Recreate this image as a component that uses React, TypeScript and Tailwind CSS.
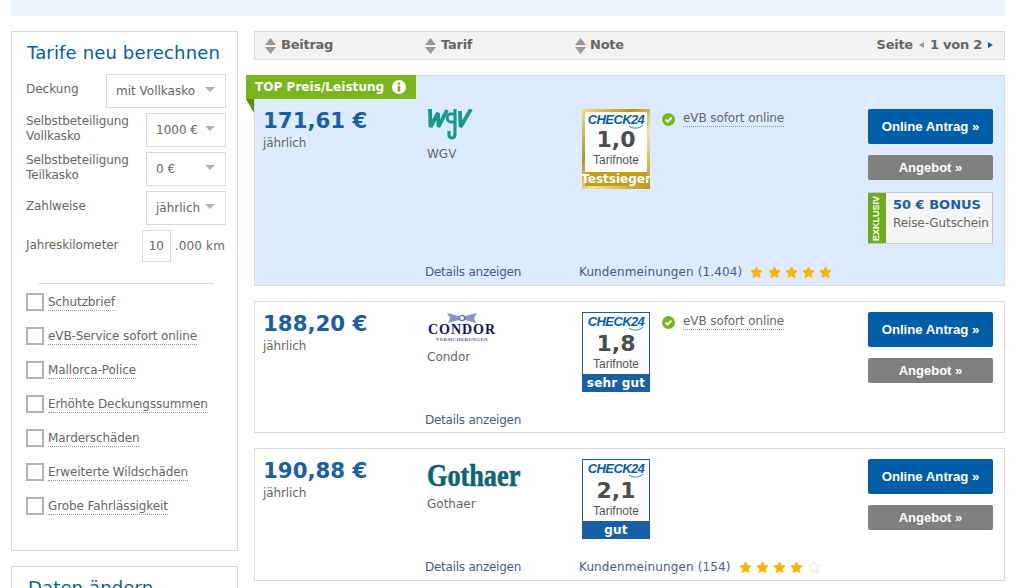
import { Star } from 'lucide-react';

const sans = "font-['DejaVu_Sans',Verdana,sans-serif]";

const coverage = [
  { label: ['Selbstbeteiligung', 'Vollkasko'], value: '1000 €' },
  { label: ['Selbstbeteiligung', 'Teilkasko'], value: '0 €' },
  { label: ['Zahlweise'], value: 'jährlich' },
];

const options = [
  'Schutzbrief',
  'eVB-Service sofort online',
  'Mallorca-Police',
  'Erhöhte Deckungssummen',
  'Marderschäden',
  'Erweiterte Wildschäden',
  'Grobe Fahrlässigkeit',
];

function SelectBox({ value, width }: { value: string; width: string }) {
  return (
    <div className={`flex h-[34px] items-center justify-between border border-[#d9d9d9] bg-white pl-[9px] pr-[10px] text-[12px] text-[#666] ${width}`}>
      <span>{value}</span>
      <svg width="10" height="5" viewBox="0 0 10 5" className="mb-[3px] shrink-0">
        <path d="M0 0h10L5 5z" fill="#b3b3b3" />
      </svg>
    </div>
  );
}

function SortArrows() {
  return (
    <svg width="11" height="16" viewBox="0 0 11 16" className="shrink-0">
      <path d="M5.5 0L11 7H0z" fill="#999" />
      <path d="M0 9h11l-5.5 7z" fill="#999" />
    </svg>
  );
}

function Sidebar() {
  return (
    <aside className="w-[227px] shrink-0">
      <div className="h-[520px] border border-[#d9d9d9] pl-[14px] pr-[11px] pt-[9px]">
        <h2 className="pl-[1px] text-[18px] leading-[24px] tracking-[0.15px] text-[#005ea8]">Tarife neu berechnen</h2>
        <div className="mt-[9px] flex items-center justify-between">
          <span className="mb-[5px] text-[12px] text-[#666]">Deckung</span>
          <SelectBox value="mit Vollkasko" width="w-[120px]" />
        </div>
        {coverage.map((row) => (
          <div key={row.value} className="mt-[5px] flex items-center justify-between">
            <span className="mb-[3px] text-[12px] leading-[15px] tracking-[-0.1px] text-[#666]">
              {row.label.map((line) => (
                <span key={line} className="block">{line}</span>
              ))}
            </span>
            <SelectBox value={row.value} width="w-[80px]" />
          </div>
        ))}
        <div className="mt-[5px] flex items-center justify-between">
          <span className="mb-[3px] text-[12px] tracking-[-0.1px] text-[#666]">Jahreskilometer</span>
          <span className="flex items-center pr-[1px] text-[12px] text-[#666]">
            <span className="flex h-[32px] w-[29px] items-center justify-center border border-[#d9d9d9]">10</span>
            <span className="ml-[4px] tracking-[0.15px]">.000 km</span>
          </span>
        </div>
        <div className="mx-[12px] mt-[21px] border-t border-[#d9d9d9]" />
        <ul className="mt-[9px] flex flex-col gap-[16px]">
          {options.map((option) => (
            <li key={option} className="flex h-[18px] items-center gap-[4px]">
              <span className="h-[18px] w-[18px] shrink-0 border-2 border-[#b3b3b3] bg-white" />
              <span className="mt-[2px] border-b border-dotted border-[#999] text-[12px] leading-[15px] tracking-[-0.1px] text-[#666]">{option}</span>
            </li>
          ))}
        </ul>
      </div>
      <div className="mt-[15px] h-[60px] border border-[#d9d9d9] pl-[16px] pt-[9px]">
        <h2 className="text-[18px] leading-[24px] tracking-[0.15px] text-[#005ea8]">Daten ändern</h2>
      </div>
    </aside>
  );
}

function HeaderBar() {
  return (
    <div className="flex h-[29px] items-center border border-[#d9d9d9] bg-[#f2f2f2] text-[13px] font-bold tracking-[-0.25px] text-[#666]">
      <div className="ml-[10px] flex w-[160px] items-center gap-[5px]">
        <SortArrows />
        <span className="mb-[2px]">Beitrag</span>
      </div>
      <div className="flex w-[150px] items-center gap-[5px]">
        <SortArrows />
        <span className="mb-[2px]">Tarif</span>
      </div>
      <div className="flex items-center gap-[4px]">
        <SortArrows />
        <span className="mb-[2px]">Note</span>
      </div>
      <div className="ml-auto mr-[11px] flex items-center">
        <span className="mb-[2px]">Seite</span>
        <svg width="5" height="6" viewBox="0 0 5 6" className="mx-[6px] mb-[2px]">
          <path d="M5 0v6L0 3z" fill="#999" />
        </svg>
        <span className="mb-[2px]">1 von 2</span>
        <svg width="5" height="6" viewBox="0 0 5 6" className="mb-[2px] ml-[6px]">
          <path d="M0 0v6l5-3z" fill="#005ea8" />
        </svg>
      </div>
    </div>
  );
}

function WgvLogo() {
  return (
    <svg width="46" height="31" viewBox="0 0 46 31" fill="none" stroke="#18998f" strokeLinejoin="bevel">
      <path d="M3 0l.5 18L11 4l.5 14L20 1" strokeWidth="3.8" />
      <path d="M28 5h-5c-3 0-4 7 0 8h5" strokeWidth="2.8" />
      <path d="M28 0v25c0 5-6 5-6 1v-4" strokeWidth="3.2" />
      <path d="M33 2l.5 16L44 0" strokeWidth="3.8" />
    </svg>
  );
}

function CondorLogo() {
  return (
    <div className="flex w-[70px] flex-col items-center font-['Liberation_Serif',serif] text-[#14145a]">
      <svg width="30" height="10" viewBox="0 0 30 10" className="mb-[1px]">
        <path d="M0 0l12 3v4L1 10l2-5z" fill="#8f8fcf" />
        <path d="M30 0L18 3v4l11 3-2-5z" fill="#8f8fcf" />
        <circle cx="15" cy="5" r="2.6" fill="none" stroke="#6a6ab0" strokeWidth="1.3" />
      </svg>
      <span className="text-[14px] font-bold leading-[12px] tracking-[1px]">CONDOR</span>
      <span className="text-[5px] font-bold leading-[7px] tracking-[0.3px] text-[#5a5a90]">VERSICHERUNGEN</span>
    </div>
  );
}

function GothaerLogo() {
  return (
    <span className="origin-left scale-x-[0.82] font-['Liberation_Serif',serif] text-[32px] font-bold leading-[30px] text-[#0f6470] [-webkit-text-stroke:0.6px_#0f6470]">
      Gothaer
    </span>
  );
}

function CheckMark() {
  return (
    <span className="relative block">
      <span className="block font-['Liberation_Sans',sans-serif] text-[13px] font-bold italic leading-[14px] tracking-[-0.6px] text-[#005ea8]">
        CHECK24
      </span>
      <svg width="16" height="4" viewBox="0 0 16 4" className="absolute -bottom-[2px] right-0">
        <path d="M1 1c4 3 10 3 14-1" fill="none" stroke="#005ea8" strokeWidth="0.8" />
      </svg>
    </span>
  );
}

function GradeBadge({ grade, label, gold }: { grade: string; label: string; gold?: boolean }) {
  const frame = gold
    ? 'bg-[linear-gradient(135deg,#f1dc8c,#b98f1c_35%,#f5e49c_60%,#bd9120)] p-[3px]'
    : 'bg-[#1a5ea4] p-[1px] pb-0';
  return (
    <div className={`flex h-[80px] w-[68px] shrink-0 flex-col ${frame}`}>
      <div className={`flex flex-1 flex-col items-center bg-white ${gold ? 'pt-[1px]' : 'pt-[2px]'}`}>
        <CheckMark />
        <span className={`text-[22px] font-bold leading-[26px] text-[#4d4d4d] ${gold ? '' : 'mt-[2px]'}`}>{grade}</span>
        <span className="mt-[1px] font-['Liberation_Sans',sans-serif] text-[12px] leading-[13px] text-[#555]">Tarifnote</span>
      </div>
      <div className={`flex items-center justify-center whitespace-nowrap text-[12px] font-bold text-white ${gold ? 'h-[14px] bg-[#c49d1c]' : 'h-[18px] bg-[#1a5ea4] tracking-[0.2px]'}`}>
        {label}
      </div>
    </div>
  );
}

function Check() {
  return (
    <svg width="13" height="13" viewBox="0 0 13 13" className="shrink-0">
      <circle cx="6.5" cy="6.5" r="6.5" fill="#7ab51d" />
      <path d="M3.5 6.5l2.2 2.2 3.8-4" fill="none" stroke="#fff" strokeWidth="1.8" />
    </svg>
  );
}

function Rating({ count, stars }: { count: string; stars: number }) {
  return (
    <div className="mt-[1px] flex items-center text-[12px] tracking-[0.12px] text-[#4a5a8c]">
      Kundenmeinungen ({count})
      <span className="ml-[8px] flex gap-[4.3px]">
        {[1, 2, 3, 4, 5].map((n) => (
          <Star
            key={n}
            size={13}
            strokeWidth={1.5}
            className={n <= stars ? 'fill-[#fbb400] text-[#fbb400]' : 'text-[#f5dcc0]'}
          />
        ))}
      </span>
    </div>
  );
}

function Buttons({ bonus }: { bonus?: boolean }) {
  return (
    <div className="flex w-[125px] shrink-0 flex-col font-['Liberation_Sans',sans-serif] font-bold text-white">
      <button className="h-[35px] rounded-[2px] bg-[#005ea8] text-[13.2px]">Online Antrag »</button>
      <button className="mt-[11px] h-[25px] rounded-[2px] bg-[#808080] text-[13px]">Angebot »</button>
      {bonus && (
        <div className="mt-[12px] flex h-[52px] border border-[#c8c8c8] bg-[#f5f5f5]">
          <span className="-my-[1px] -ml-[1px] flex w-[18px] rotate-180 items-center justify-center bg-[#6cab1e] text-[9px] [writing-mode:vertical-rl]">
            EXKLUSIV
          </span>
          <div className={`pl-[8px] pt-[3px] font-normal text-[#666] ${sans}`}>
            <div className="text-[13px] font-bold leading-[18px] text-[#1a5ea4]">50 € BONUS</div>
            <div className="text-[12px] leading-[18px] tracking-[-0.1px]">Reise-Gutschein</div>
          </div>
        </div>
      )}
    </div>
  );
}

function TopFlag() {
  return (
    <div className="absolute -left-[9px] -top-[1px]">
      <div className="flex h-[24px] w-[170px] items-center gap-[8px] bg-[#7ab51d] pl-[9px] text-[12px] font-bold tracking-[0.05px] text-white">
        TOP Preis/Leistung
        <svg width="14" height="14" viewBox="0 0 14 14">
          <circle cx="7" cy="7" r="7" fill="#fff" />
          <rect x="5.8" y="2.5" width="2.4" height="2.2" fill="#7ab51d" />
          <rect x="5.8" y="5.7" width="2.4" height="5.8" fill="#7ab51d" />
        </svg>
      </div>
      <svg width="8" height="14" viewBox="0 0 8 14" className="block">
        <path d="M0 0h8v14z" fill="#5c8c14" />
      </svg>
    </div>
  );
}

type Offer = {
  price: string;
  name: string;
  logo: React.ReactNode;
  grade: string;
  gradeLabel: string;
  top?: boolean;
  evb?: boolean;
  rating?: { count: string; stars: number };
};

const offers: Offer[] = [
  { price: '171,61 €', name: 'WGV', logo: <WgvLogo />, grade: '1,0', gradeLabel: 'Testsieger', top: true, evb: true, rating: { count: '1.404', stars: 5 } },
  { price: '188,20 €', name: 'Condor', logo: <CondorLogo />, grade: '1,8', gradeLabel: 'sehr gut', evb: true },
  { price: '190,88 €', name: 'Gothaer', logo: <GothaerLogo />, grade: '2,1', gradeLabel: 'gut', rating: { count: '154', stars: 4 } },
];

const cardHeights = ['h-[211px]', 'h-[132px]', 'h-[133px]'];

function OfferCard({ offer, index }: { offer: Offer; index: number }) {
  return (
    <article className={`relative flex flex-col border border-[#d9d9d9] ${cardHeights[index]} ${offer.top ? 'bg-[#dcebfd] pt-[33px]' : 'bg-white pt-[10px]'}`}>
      {offer.top && <TopFlag />}
      <div className="flex pl-[8px] pr-[11px]">
        <div className="w-[164px] shrink-0">
          <div className="mt-[1px] text-[21.3px] font-bold leading-[22px] text-[#1a5ea4]">{offer.price}</div>
          <div className="mt-[4px] text-[12px] leading-[15px] tracking-[-0.1px] text-[#666]">jährlich</div>
        </div>
        <div className="w-[155px] shrink-0">
          <div className="flex h-[31px] items-center">{offer.logo}</div>
          <div className="mt-[7px] text-[12px] leading-[15px] text-[#666]">{offer.name}</div>
        </div>
        <GradeBadge grade={offer.grade} label={offer.gradeLabel} gold={offer.top} />
        <div className="ml-[12px] flex-1 pt-[2px]">
          {offer.evb && (
            <div className="flex items-center gap-[8px] text-[12px] tracking-[-0.1px] text-[#666]">
              <Check />
              <span className="border-b border-dotted border-[#999] leading-[15px]">eVB sofort online</span>
            </div>
          )}
        </div>
        <Buttons bonus={offer.top} />
      </div>
      <div className={`mt-auto flex items-center pl-[170px] text-[12px] leading-[16px] text-[#4a5a8c] ${index === 1 ? 'mb-[4px]' : 'mb-[5px]'}`}>
        <span className="w-[154px] shrink-0 tracking-[-0.25px]">Details anzeigen</span>
        {offer.rating && <Rating count={offer.rating.count} stars={offer.rating.stars} />}
      </div>
    </article>
  );
}

export default function App() {
  return (
    <div className={`h-[588px] overflow-hidden bg-white px-[11px] ${sans}`}>
      <div className="h-[16px] w-[994px] bg-[#ebf3fc]" />
      <div className="mt-[15px] flex w-[994px] gap-[16px]">
        <Sidebar />
        <main className="w-[751px]">
          <HeaderBar />
          <div className="mt-[15px] flex flex-col gap-[15px]">
            {offers.map((offer, index) => (
              <OfferCard key={offer.name} offer={offer} index={index} />
            ))}
          </div>
        </main>
      </div>
    </div>
  );
}
